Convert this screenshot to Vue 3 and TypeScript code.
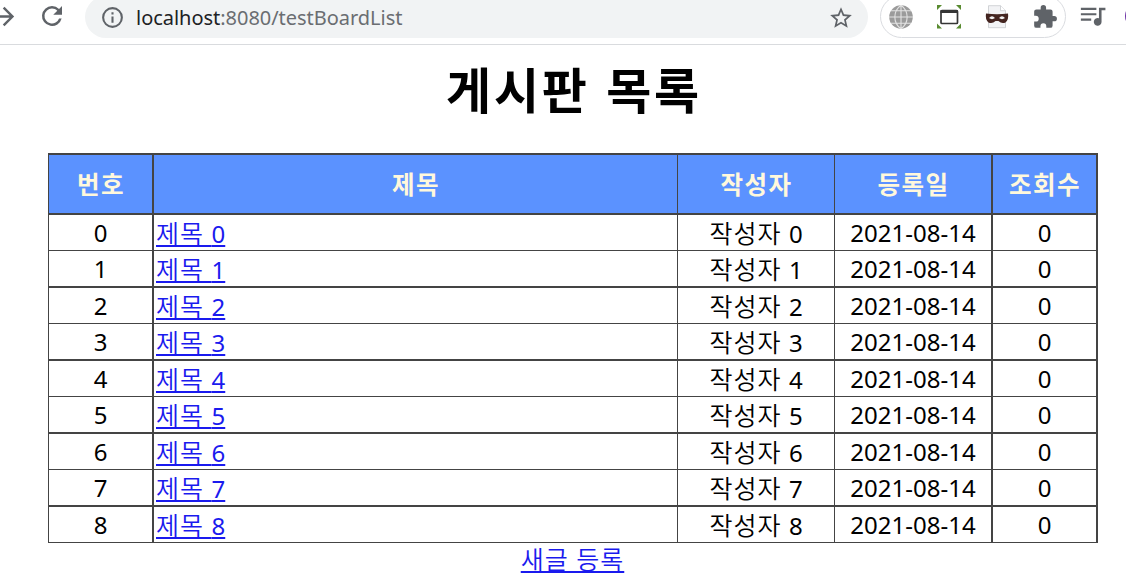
<script setup lang="ts">
interface Post {
  id: number
  date: string
  views: number
}

const posts: Post[] = Array.from({ length: 9 }, (_, id) => ({ id, date: '2021-08-14', views: 0 }))
const headers: string[] = ['번호', '제목', '작성자', '등록일', '조회수']
</script>

<template>
  <div class="window">
    <header class="toolbar">
      <svg class="forward" viewBox="0 0 24 24"><path d="M12 4l-1.41 1.41L16.17 11H4v2h12.17l-5.58 5.59L12 20l8-8z" /></svg>
      <svg class="reload" viewBox="0 0 24 24"><path d="M17.65 6.35A7.96 7.96 0 0 0 12 4a8 8 0 1 0 7.73 10h-2.08A6 6 0 1 1 12 6c1.66 0 3.14.69 4.22 1.78L13 11h7V4z" /></svg>
      <div class="omnibox">
        <svg class="info" viewBox="0 0 24 24"><path d="M11 17h2v-6h-2zm1-15a10 10 0 1 0 0 20 10 10 0 0 0 0-20zm0 18a8 8 0 1 1 0-16 8 8 0 0 1 0 16zM11 9h2V7h-2z" /></svg>
        <span class="url"><span class="host">localhost</span>:8080/testBoardList</span>
        <svg class="star" viewBox="0 0 24 24"><path d="M22 9.24l-7.19-.62L12 2 9.19 8.63 2 9.24l5.46 4.73L5.82 21 12 17.27 18.18 21l-1.63-7.03zM12 15.4l-3.76 2.27 1-4.28-3.32-2.88 4.38-.38L12 6.1l1.71 4.04 4.38.38-3.32 2.88 1 4.28z" /></svg>
      </div>
      <div class="extensions">
        <svg class="globe" viewBox="0 0 24 24">
          <circle cx="12" cy="12" r="11.8" fill="#9b9b9b" />
          <path d="M12 0v24M0 12h24M2 5.7h20M2 18.3h20M12 .2C3.8 6 3.8 18 12 23.8M12 .2c8.200 5.800 8.200 17.800 0 23.600" fill="none" stroke="#e3e3e3" stroke-width="1.100" />
        </svg>
        <svg class="capture" viewBox="0 0 24 24">
          <path d="M0 0h5L0 5zM19 0h5v5zM0 18.500l5 5H0zM24 18.500v5h-5z" fill="#598b30" />
          <rect x="4" y="5.500" width="16.500" height="13" rx="1" fill="#fff" stroke="#353535" stroke-width="1.700" />
          <path d="M3.500 5h17.500v3H3.500z" fill="#353535" />
        </svg>
        <svg class="mask" viewBox="0 0 24 24">
          <path d="M3.500.7h12l5 5v17h-17z" fill="#f2f3f5" stroke="#c6c9cd" stroke-width=".8" />
          <path d="M15.500.7v5h5" fill="#fff" stroke="#c6c9cd" stroke-width=".8" />
          <path d="M1 8.500q11 1.500 22 0 1 6-2.500 9-4 1.500-7-1.500h-3q-3 3-7 1.500Q0 14.500 1 8.500z" fill="#442520" />
          <path d="M4 13q3-3.500 6 0-3 2.300-6 0zM14 13q3-3.500 6 0-3 2.300-6 0z" fill="#f2f2f2" />
        </svg>
        <svg class="puzzle" viewBox="0 0 24 24"><path d="M20.500 11H19V7a2 2 0 0 0-2-2h-4V3.500a2.500 2.500 0 0 0-5 0V5H4a2 2 0 0 0-2 2v3.800h1.500a2.700 2.700 0 0 1 0 5.400H2V20a2 2 0 0 0 2 2h3.800v-1.500a2.700 2.700 0 0 1 5.400 0V22H17a2 2 0 0 0 2-2v-4h1.500a2.500 2.500 0 0 0 0-5z" /></svg>
      </div>
      <svg class="music" viewBox="0 0 24 24"><path d="M15 6H3v1.700h12zm0 4.200H3v1.700h12zM3 16h8v-1.700H3zM17 6v8.180A3 3 0 1 0 19 17V8h3V6z" /></svg>
      <span class="avatar"></span>
    </header>

    <main>
      <h1>게시판 목록</h1>
      <div class="board" role="table">
        <div class="row head" role="row">
          <div v-for="h in headers" :key="h" class="cell" role="columnheader">{{ h }}</div>
        </div>
        <div v-for="p in posts" :key="p.id" class="row" role="row">
          <div class="cell">{{ p.id }}</div>
          <div class="cell title"><a><span class="ko">제목 </span>{{ p.id }}</a></div>
          <div class="cell"><span class="ko">작성자 </span>{{ p.id }}</div>
          <div class="cell">{{ p.date }}</div>
          <div class="cell">{{ p.views }}</div>
        </div>
      </div>
      <a class="new ko">새글 등록</a>
    </main>
  </div>
</template>

<style>
body {
  margin: 0;
  background: #fff;
}
</style>

<style scoped>
.window {
  width: 1126px;
  height: 583px;
  overflow: hidden;
  font-family: "Noto Sans", "Noto Sans CJK KR", sans-serif;
  color: #000;
}
.toolbar {
  display: flex;
  align-items: flex-start;
  height: 44px;
  overflow: hidden;
  border-bottom: 1px solid #d9dbde;
}
svg {
  display: block;
  flex: none;
  fill: #5f6368;
}
.forward {
  width: 29px;
  height: 29px;
  margin: 2px 0 0 -10px;
}
.reload {
  width: 30px;
  height: 30px;
  margin: 1px 0 0 18px;
}
.omnibox {
  display: flex;
  align-items: center;
  flex: none;
  box-sizing: border-box;
  width: 783px;
  height: 42px;
  margin: -4px 0 0 18px;
  padding: 1px 14px 0 15px;
  border-radius: 21px;
  background: #f1f3f4;
}
.info {
  width: 25px;
  height: 25px;
}
.url {
  flex: 1;
  margin-left: 11px;
  font-size: 20px;
  line-height: 28px;
  letter-spacing: -0.03px;
  color: #6a6d71;
  white-space: nowrap;
}
.host {
  color: #202124;
}
.star {
  width: 26px;
  height: 26px;
}
.extensions {
  display: flex;
  align-items: center;
  flex: none;
  box-sizing: border-box;
  width: 186px;
  height: 43px;
  margin: -5px 0 0 12px;
  padding-left: 8px;
  border: 1.5px solid #dadce0;
  border-radius: 22px;
}
.globe {
  width: 24px;
  height: 24px;
}
.capture {
  width: 24px;
  height: 24px;
  margin-left: 24px;
}
.mask {
  width: 24px;
  height: 24px;
  margin-left: 24px;
}
.puzzle {
  width: 26px;
  height: 26px;
  margin-left: 23px;
}
.music {
  width: 31px;
  height: 31px;
  margin: 0 0 0 11px;
}
.avatar {
  flex: none;
  width: 26px;
  height: 26px;
  margin: 3px 0 0 17px;
  border-radius: 50%;
  background: #6b2fa5;
}
main {
  display: flex;
  flex-direction: column;
}
h1 {
  height: 108px;
  margin: 0;
  padding-left: 22px;
  font-size: 49px;
  line-height: 90px;
  font-weight: 700;
  text-align: center;
  letter-spacing: 2.8px;
  word-spacing: 1px;
}
.board {
  width: 1049px;
  margin-left: 48px;
  border-top: 2px solid #444;
  border-left: 1px solid #444;
}
.row {
  display: grid;
  grid-template-columns: 105px 524px 157px 158px 105px;
  height: 36px;
}
.row:nth-child(odd) {
  height: 37px;
}
.row.head {
  height: 60px;
}
.cell {
  box-sizing: border-box;
  overflow: hidden;
  border-right: 1px solid #444;
  border-bottom: 1px solid #444;
  font-size: 24px;
  line-height: 36px;
  text-align: center;
  white-space: nowrap;
}
.cell:nth-child(1),
.cell:nth-child(4),
.cell:nth-child(5) {
  border-right-width: 2px;
}
.row:nth-child(odd) .cell {
  border-bottom-width: 2px;
}
.ko {
  font-size: 25px;
  letter-spacing: 1px;
  font-weight: 350;
}
.head .cell {
  background: #5b92ff;
  color: #fff8dc;
  font-size: 24.5px;
  letter-spacing: 1.4px;
  padding-left: 1px;
  font-weight: 700;
  line-height: 60px;
}
.cell.title {
  padding-left: 2px;
  text-align: left;
}
a {
  color: #1a1aee;
  text-decoration: underline;
  text-decoration-thickness: 2px;
  text-underline-offset: 2px;
}
.new {
  align-self: center;
  margin-left: 19px;
  line-height: 33px;
}
</style>
